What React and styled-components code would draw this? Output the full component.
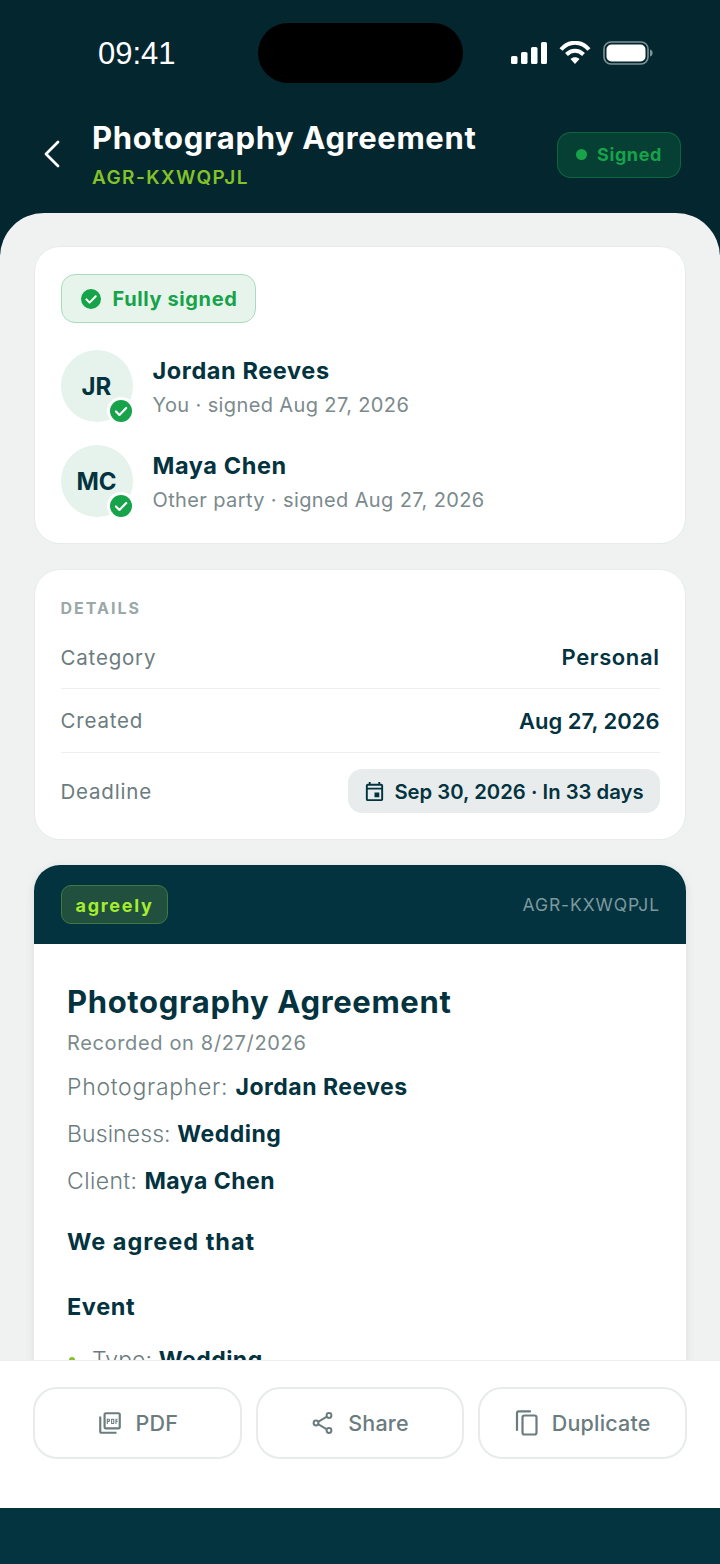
import React from 'react';
import styled, { createGlobalStyle } from 'styled-components';
import { MdOutlineEvent, MdOutlinePictureAsPdf } from 'react-icons/md';

const GlobalStyle = createGlobalStyle`
  html, body { margin: 0; padding: 0; }
  body { font-family: Inter, "Noto Sans", sans-serif; background: #03343f; }
  * { box-sizing: border-box; }
`;

const Screen = styled.div`
  width: 720px;
  height: 1564px;
  display: flex;
  flex-direction: column;
  overflow: hidden;
  background: #03262f;
`;
const Header = styled.header`
  height: 213px;
  flex: none;
  background: #03262f;
`;
const StatusBar = styled.div`
  display: grid;
  grid-template-columns: 258px 205px 1fr;
  align-items: center;
  padding-top: 23px;
`;
const Clock = styled.div`
  padding: 1px 0 0 98px;
  font: 400 31px "Liberation Sans", sans-serif;
  color: #fff;
`;
const Island = styled.div`
  height: 60px;
  border-radius: 30px;
  background: #000;
`;
const StatusIcons = styled.div`
  padding-left: 48px;
  display: flex;
  align-items: center;
  gap: 12px;
`;
const TitleRow = styled.div`
  display: flex;
  align-items: center;
  margin-top: 35px;
  padding: 0 39px 0 43px;
`;
const Back = styled.svg`
  width: 18px;
  height: 28px;
  margin-top: -1px;
  margin-right: 31px;
  flex: none;
`;
const TitleBlock = styled.div`
  flex: 1;
  min-width: 0;
`;
const Title = styled.div`
  font-size: 31px;
  line-height: 40px;
  font-weight: 700;
  letter-spacing: 0.65px;
  color: #fff;
`;
const Code = styled.div`
  margin-top: 7px;
  font-size: 19px;
  line-height: 26px;
  font-weight: 600;
  letter-spacing: 1.4px;
  color: #84c229;
`;
const StatusBadge = styled.div`
  width: 124px;
  height: 46px;
  display: flex;
  align-items: center;
  justify-content: center;
  gap: 10px;
  border-radius: 14px;
  border: 1.5px solid rgba(22, 163, 74, 0.4);
  background: rgba(22, 163, 74, 0.2);
  color: #16a34a;
  font-size: 18px;
  font-weight: 700;
  letter-spacing: 0.6px;
`;
const Dot = styled.span`
  width: 11px;
  height: 11px;
  border-radius: 50%;
  background: #16a34a;
`;
const Sheet = styled.main`
  flex: 1;
  min-height: 0;
  overflow: hidden;
  padding: 33px 34px 0;
  display: flex;
  flex-direction: column;
  gap: 25px;
  background: #f0f2f2;
  border-radius: 44px 44px 0 0;
`;
const Card = styled.section`
  flex: none;
  padding: 26.5px 25.5px 26.5px;
  background: #fff;
  border: 1.5px solid #e8ebeb;
  border-radius: 26px;
`;
const DetailsCard = styled(Card)`
  padding-top: 28px;
  padding-bottom: 10px;
`;
const SignedPill = styled.div`
  width: 195px;
  height: 49px;
  display: flex;
  align-items: center;
  justify-content: center;
  gap: 12px;
  padding: 1px 0 0 2px;
  background: #e6f4ec;
  border: 1.5px solid #a8dcbc;
  border-radius: 14px;
  color: #16a34a;
  font-size: 20px;
  font-weight: 700;
  letter-spacing: 0.6px;
`;
const Party = styled.div`
  display: flex;
  align-items: center;
  gap: 20px;
  margin-top: ${p => p.$gap}px;
`;
const Avatar = styled.div`
  position: relative;
  width: 72px;
  height: 72px;
  flex: none;
  display: flex;
  align-items: center;
  justify-content: center;
  padding-top: 2px;
  border-radius: 50%;
  background: #e6f2ec;
  color: #03333f;
  font-size: 24px;
  font-weight: 700;
`;
const AvatarCheck = styled.span`
  position: absolute;
  right: -2px;
  bottom: -3px;
  width: 28px;
  height: 28px;
  display: flex;
  border-radius: 50%;
  background: #fff;
  padding: 3px;
`;
const PartyText = styled.div`
  padding-top: 4px;
`;
const PartyName = styled.div`
  font-size: 23.5px;
  line-height: 30px;
  font-weight: 700;
  letter-spacing: 0.6px;
  color: #03333f;
`;
const PartyNote = styled.div`
  margin-top: 5px;
  font-size: 20px;
  line-height: 28px;
  letter-spacing: 0.38px;
  color: #7b8a8c;
`;
const SectionLabel = styled.div`
  margin-bottom: 8px;
  font-size: 16px;
  line-height: 20px;
  font-weight: 700;
  letter-spacing: 2px;
  color: #9aa8a9;
`;
const DetailRow = styled.div`
  display: flex;
  align-items: center;
  justify-content: space-between;
  height: ${p => p.$height}px;
  border-bottom: ${p => (p.$last ? 'none' : '1px solid #eef0f0')};
`;
const DetailLabel = styled.span`
  font-size: 20.5px;
  letter-spacing: 0.8px;
  color: #6b7c7e;
`;
const DetailValue = styled.span`
  font-size: 22px;
  font-weight: 600;
  letter-spacing: ${p => p.$spacing}px;
  color: #03333f;
`;
const DeadlinePill = styled.div`
  width: 312px;
  height: 44px;
  display: flex;
  align-items: center;
  justify-content: center;
  gap: 8px;
  background: #e9eced;
  border-radius: 14px;
  color: #03333f;
  font-size: 20.3px;
  font-weight: 600;
`;
const DocCard = styled.section`
  flex: none;
  background: #fff;
  border-radius: 26px 26px 0 0;
  box-shadow: 0 2px 10px rgba(3, 51, 63, 0.1);
`;
const DocHead = styled.div`
  height: 79px;
  display: flex;
  align-items: center;
  justify-content: space-between;
  padding: 0 26px 0 27px;
  background: #03333f;
  border-radius: 26px 26px 0 0;
`;
const Logo = styled.div`
  width: 107px;
  height: 39px;
  display: flex;
  align-items: center;
  justify-content: center;
  padding-top: 1px;
  border-radius: 10px;
  border: 1.5px solid #3f7a3f;
  background: #21503f;
  color: #a6ec2e;
  font-size: 18px;
  font-weight: 700;
  letter-spacing: 1.7px;
`;
const DocCode = styled.span`
  font-size: 17.5px;
  letter-spacing: 0.9px;
  color: #7d989e;
`;
const DocBody = styled.div`
  padding: 37px 33px;
`;
const DocTitle = styled.div`
  font-size: 31px;
  line-height: 42px;
  font-weight: 700;
  letter-spacing: 0.65px;
  color: #03333f;
`;
const Recorded = styled.div`
  font-size: 20px;
  line-height: 28px;
  margin-top: 6px;
  letter-spacing: 0.65px;
  color: #7b8a8c;
`;
const Line = styled.div`
  margin-top: ${p => p.$top}px;
  font-size: 23px;
  line-height: 30px;
  font-weight: 300;
  letter-spacing: ${p => p.$spacing}px;
  color: #6b7c7e;
  b { font-weight: 700; color: #03333f; letter-spacing: 0.5px; }
`;
const BulletLine = styled(Line)`
  display: flex;
  align-items: center;
  gap: 17px;
  padding-left: 2px;
`;
const Bullet = styled.span`
  width: 6px;
  height: 6px;
  border-radius: 50%;
  background: #84c229;
`;
const Heading = styled.div`
  margin-top: ${p => p.$top}px;
  font-size: 23.5px;
  line-height: 30px;
  font-weight: 700;
  letter-spacing: ${p => p.$spacing}px;
  color: #03333f;
`;
const Footer = styled.footer`
  flex: none;
  height: 148px;
  padding: 26px 33px 0;
  display: flex;
  gap: 14px;
  background: #fff;
  border-top: 1px solid #eceeee;
`;
const ActionButton = styled.button`
  flex: 1;
  height: 72px;
  display: flex;
  align-items: center;
  justify-content: center;
  gap: 13px;
  padding: 0;
  background: #fff;
  border: 2px solid #e8ebeb;
  border-radius: 24px;
  color: #6b7c7e;
  font-family: inherit;
  font-size: 21.5px;
  font-weight: 500;
  letter-spacing: 0.2px;
`;
const HomeStrip = styled.div`
  flex: none;
  height: 56px;
  background: #03343f;
`;

const CheckBadge = ({ size }) => (
  <svg width={size} height={size} viewBox="0 0 24 24">
    <circle cx="12" cy="12" r="12" fill="#16a34a" />
    <path d="M6.5 12.5l3.8 3.8 7.4-7.6" fill="none" stroke="#fff" strokeWidth="2.4" strokeLinecap="round" strokeLinejoin="round" />
  </svg>
);

const Signal = () => (
  <svg width="36" height="22" viewBox="0 0 36 22" fill="#fff">
    <rect x="0" y="14" width="6.5" height="8" rx="1.6" />
    <rect x="10" y="10" width="6.5" height="12" rx="1.6" />
    <rect x="20" y="5" width="6.5" height="17" rx="1.6" />
    <rect x="30" y="0" width="6" height="22" rx="1.6" />
  </svg>
);

const Wifi = () => (
  <svg width="32" height="24" viewBox="0 0 32 24" fill="none" stroke="#fff" strokeWidth="4">
    <path d="M2 8.5C10-.5 22-.5 30 8.5" />
    <path d="M7.5 13.5c5-5 12-5 17 0" />
    <path d="M16 23l-4.5-5c2.6-2.2 6.4-2.2 9 0z" fill="#fff" stroke="none" />
  </svg>
);

const Battery = () => (
  <svg width="50" height="24" viewBox="0 0 50 24">
    <rect x="1" y="1" width="44" height="22" rx="7" fill="none" stroke="#7f9296" strokeWidth="1.6" />
    <rect x="3.5" y="3.5" width="39" height="17" rx="5" fill="#fff" />
    <path d="M47 8.5c2 .6 2.6 2 2.6 3.5s-.6 2.9-2.6 3.5z" fill="#7f9296" />
  </svg>
);

const ShareIcon = () => (
  <svg width="24" height="24" viewBox="0 0 24 24" fill="none" stroke="currentColor" strokeWidth="2">
    <circle cx="18" cy="4.5" r="2.4" />
    <circle cx="5" cy="12" r="2.4" />
    <circle cx="18" cy="19.5" r="2.4" />
    <path d="M7.1 10.8l8.8-5.1M7.1 13.2l8.8 5.1" />
  </svg>
);

const CopyIcon = () => (
  <svg width="24" height="26" viewBox="0 0 24 26" fill="none" stroke="currentColor" strokeWidth="2.2" strokeLinejoin="round">
    <rect x="7.5" y="5.5" width="14" height="19" rx="2" />
    <path d="M2 20V3a1.6 1.6 0 0 1 1.6-1.6H15" strokeLinecap="round" />
  </svg>
);

export default function App() {
  return (
    <Screen>
      <GlobalStyle />
      <Header>
        <StatusBar>
          <Clock>09:41</Clock>
          <Island />
          <StatusIcons>
            <Signal />
            <Wifi />
            <Battery />
          </StatusIcons>
        </StatusBar>
        <TitleRow>
          <Back viewBox="0 0 18 28" fill="none" stroke="#fff" strokeWidth="2.8" strokeLinecap="round" strokeLinejoin="round">
            <path d="M15 2L3 14l12 12" />
          </Back>
          <TitleBlock>
            <Title>Photography Agreement</Title>
            <Code>AGR-KXWQPJL</Code>
          </TitleBlock>
          <StatusBadge><Dot />Signed</StatusBadge>
        </TitleRow>
      </Header>
      <Sheet>
        <Card>
          <SignedPill><CheckBadge size={20} />Fully signed</SignedPill>
          <Party $gap={27}>
            <Avatar>JR<AvatarCheck><CheckBadge size={22} /></AvatarCheck></Avatar>
            <PartyText>
              <PartyName>Jordan Reeves</PartyName>
              <PartyNote>You · signed Aug 27, 2026</PartyNote>
            </PartyText>
          </Party>
          <Party $gap={23}>
            <Avatar>MC<AvatarCheck><CheckBadge size={22} /></AvatarCheck></Avatar>
            <PartyText>
              <PartyName>Maya Chen</PartyName>
              <PartyNote>Other party · signed Aug 27, 2026</PartyNote>
            </PartyText>
          </Party>
        </Card>
        <DetailsCard>
          <SectionLabel>DETAILS</SectionLabel>
          <DetailRow $height={63}>
            <DetailLabel>Category</DetailLabel>
            <DetailValue $spacing={0.6}>Personal</DetailValue>
          </DetailRow>
          <DetailRow $height={64}>
            <DetailLabel>Created</DetailLabel>
            <DetailValue $spacing={0}>Aug 27, 2026</DetailValue>
          </DetailRow>
          <DetailRow $height={76} $last>
            <DetailLabel>Deadline</DetailLabel>
            <DeadlinePill><MdOutlineEvent size={23} />Sep 30, 2026 · In 33 days</DeadlinePill>
          </DetailRow>
        </DetailsCard>
        <DocCard>
          <DocHead>
            <Logo>agreely</Logo>
            <DocCode>AGR-KXWQPJL</DocCode>
          </DocHead>
          <DocBody>
            <DocTitle>Photography Agreement</DocTitle>
            <Recorded>Recorded on 8/27/2026</Recorded>
            <Line $top={15} $spacing={0.7}>Photographer: <b>Jordan Reeves</b></Line>
            <Line $top={17} $spacing={0.1}>Business: <b>Wedding</b></Line>
            <Line $top={17} $spacing={0.4}>Client: <b>Maya Chen</b></Line>
            <Heading $top={31} $spacing={1}>We agreed that</Heading>
            <Heading $top={35} $spacing={0.6}>Event</Heading>
            <BulletLine $top={23} $spacing={0.1}><Bullet /><span>Type: <b>Wedding</b></span></BulletLine>
          </DocBody>
        </DocCard>
      </Sheet>
      <Footer>
        <ActionButton><MdOutlinePictureAsPdf size={26} />PDF</ActionButton>
        <ActionButton><ShareIcon />Share</ActionButton>
        <ActionButton><CopyIcon />Duplicate</ActionButton>
      </Footer>
      <HomeStrip />
    </Screen>
  );
}
